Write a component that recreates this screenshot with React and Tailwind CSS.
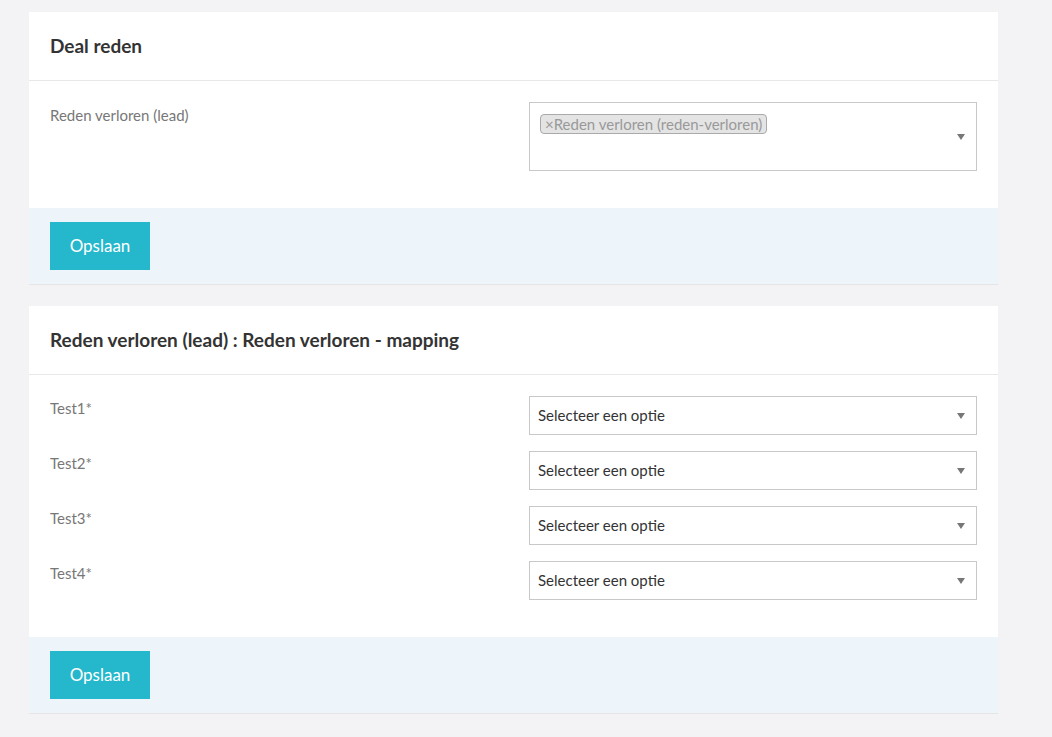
const Caret = () => (
    <span className="absolute right-[11px] top-1/2 -translate-y-1/2 w-0 h-0 border-l-[4px] border-r-[4px] border-t-[6px] border-l-transparent border-r-transparent border-t-[#777]" />
);

const Select = () => (
    <div className="relative w-[448px] h-[39px] border border-[#c8c8c8] bg-white flex items-center pl-[8px] text-[15px] text-[#333]">
        Selecteer een optie
        <Caret />
    </div>
);

const Footer = () => (
    <div className="bg-[#edf5fb] px-[21px] py-[14px] border-b border-[#e5e5e5]">
        <button className="bg-[#25b7cc] text-white text-[17px] w-[100px] h-[48px]">Opslaan</button>
    </div>
);

const Header = ({ title }) => (
    <div className="h-[69px] px-[21px] flex items-center border-b border-[#e8e8e8]">
        <h2 className="text-[19px] font-bold text-[#333]">{title}</h2>
    </div>
);

const App = () => {
    const tests = ["Test1*", "Test2*", "Test3*", "Test4*"];
    return (
        <div className="min-h-[737px] bg-[#f3f3f5] pt-[12px] pl-[29px]" style={{ fontFamily: "Lato, 'Liberation Sans', sans-serif" }}>
            <div className="w-[969px] bg-white">
                <Header title="Deal reden" />
                <div className="px-[21px] pt-[21px] pb-[37px] flex">
                    <div className="w-[479px] text-[15px] text-[#777] pt-[2px]">Reden verloren (lead)</div>
                    <div className="relative w-[448px] h-[69px] border border-[#c8c8c8] pl-[10px] pt-[9px]">
                        <span className="inline-block bg-[#e4e4e4] border border-[#aaa] rounded-[4px] px-[4px] text-[15px] leading-[18px] text-[#999]">×Reden verloren (reden-verloren)</span>
                        <Caret />
                    </div>
                </div>
                <Footer />
            </div>
            <div className="w-[969px] bg-white mt-[21px]">
                <Header title="Reden verloren (lead) : Reden verloren - mapping" />
                <div className="px-[21px] pt-[21px] pb-[37px] flex flex-col gap-[16px]">
                    {tests.map((t) => (
                        <div key={t} className="flex">
                            <div className="w-[479px] text-[15px] text-[#777] pt-[1px]">{t}</div>
                            <Select />
                        </div>
                    ))}
                </div>
                <Footer />
            </div>
        </div>
    );
};

export default App;
